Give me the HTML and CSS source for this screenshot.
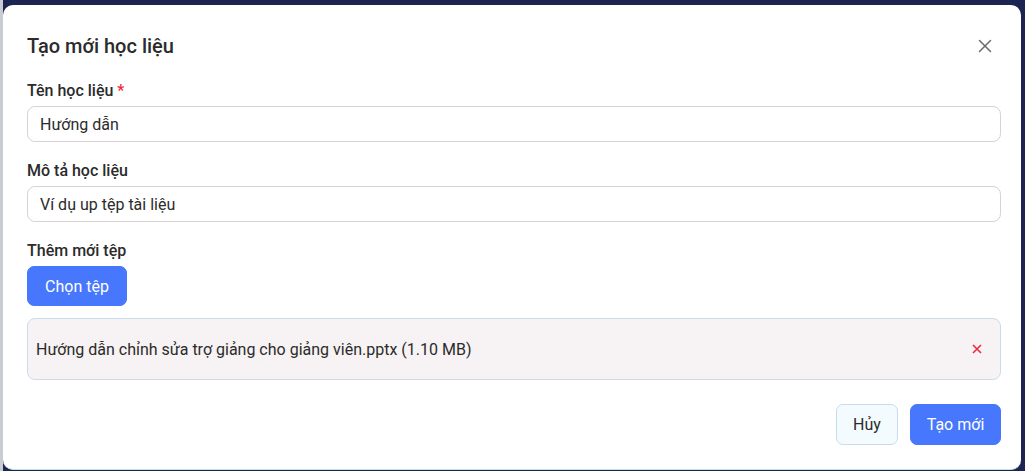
FILE: index.html
```html
<!DOCTYPE html>
<html lang="vi">
<head>
<meta charset="utf-8">
<link rel="stylesheet" href="styles.css">
</head>
<body>
<div class="backdrop">
  <div class="modal">
    <div class="modal-header">
      <h2 class="title">Tạo mới học liệu</h2>
      <button class="close" aria-label="Đóng">
        <svg width="14" height="14" viewBox="0 0 14 14"><path d="M1.5 1.5L12.5 12.5M12.5 1.5L1.5 12.5" stroke="#6b6b6b" stroke-width="1.5" stroke-linecap="round"/></svg>
      </button>
    </div>
    <div class="field">
      <label class="label">Tên học liệu <span class="req">*</span></label>
      <div class="input">Hướng dẫn</div>
    </div>
    <div class="field">
      <label class="label">Mô tả học liệu</label>
      <div class="input">Ví dụ up tệp tài liệu</div>
    </div>
    <div class="field field-file">
      <label class="label">Thêm mới tệp</label>
      <div><button class="btn btn-primary btn-pick">Chọn tệp</button></div>
    </div>
    <div class="file-box">
      <span>Hướng dẫn chỉnh sửa trợ giảng cho giảng viên.pptx (1.10 MB)</span>
      <svg class="remove" width="10" height="10" viewBox="0 0 10 10"><path d="M1 1L9 9M9 1L1 9" stroke="#f0283c" stroke-width="1.6"/></svg>
    </div>
    <div class="footer">
      <button class="btn btn-light">Hủy</button>
      <button class="btn btn-primary">Tạo mới</button>
    </div>
  </div>
</div>
</body>
</html>
```
FILE: styles.css
```css
* { box-sizing: border-box; }
html, body { margin: 0; padding: 0; }
body {
  width: 1025px;
  height: 471px;
  overflow: hidden;
  font-family: Roboto, "Noto Sans", sans-serif;
  background: #1c2552;
}
.backdrop {
  height: 471px;
  padding: 5px 4px 1px 3px;
  background: linear-gradient(to right, #c9ccd3 0, #c9ccd3 3px, transparent 3px);
}
.modal {
  background: #fff;
  border-radius: 10px;
  height: 465px;
  padding: 24px 24px 0 24px;
  border-bottom: 1px solid #c9dcee;
}
.modal-header {
  display: flex;
  align-items: center;
  justify-content: space-between;
  height: 34px;
  margin-bottom: 18px;
}
.title {
  margin: 0;
  font-size: 20px;
  font-weight: 500;
  color: #2b2b2b;
}
.close {
  border: 0;
  background: none;
  padding: 0;
  width: 14px;
  height: 14px;
  margin-right: 5px;
  display: flex;
}
.field { margin-bottom: 19px; }
.field-file { margin-bottom: 12px; }
.label {
  display: block;
  font-size: 16px;
  font-weight: 500;
  color: #2b2b2b;
  line-height: 20px;
  margin-bottom: 5px;
}
.req { color: #f0283c; }
.input {
  height: 36px;
  width: 974px;
  border: 1px solid #d9d1d3;
  border-radius: 8px;
  padding: 0 12px;
  display: flex;
  align-items: center;
  font-size: 16px;
  color: #2b2b2b;
}
.btn {
  font-family: inherit;
  font-size: 16px;
  border-radius: 7px;
  height: 41px;
  padding: 0 16px;
  cursor: pointer;
}
.btn-primary {
  background: #4677fd;
  color: #fff;
  border: 1px solid #4677fd;
}
.btn-pick { width: 100px; height: 40px; }
.btn-light {
  background: #f3fbff;
  color: #2b2b2b;
  border: 1px solid #c9dcee;
}
.file-box {
  width: 974px;
  height: 62px;
  background: #f7f2f3;
  border: 1px solid #c9dcee;
  border-radius: 8px;
  display: flex;
  align-items: center;
  justify-content: space-between;
  padding: 0 18px 0 8px;
  font-size: 16px;
  color: #2b2b2b;
}
.footer {
  display: flex;
  justify-content: flex-end;
  gap: 12px;
  width: 974px;
  margin-top: 24px;
}
.footer .btn-light { width: 62px; padding: 0; }
.footer .btn-primary { width: 91px; padding: 0; }
```
